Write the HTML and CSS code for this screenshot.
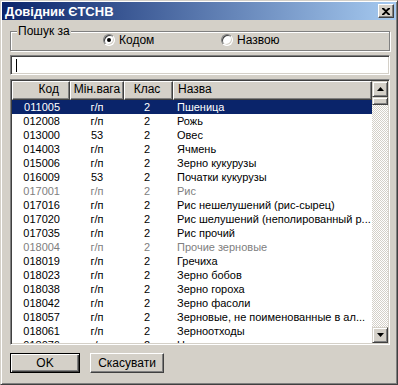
FILE: index.html
```html
<!DOCTYPE html>
<html lang="uk">
<head>
    <meta charset="UTF-8">
    <title>Довідник ЄТСНВ</title>
    <link rel="stylesheet" href="styles.css">
</head>
<body>

<div class="window">
    <!-- Title bar -->
    <div class="titlebar">
        <span class="title">Довідник ЄТСНВ</span>
        <span class="close-btn">
            <svg width="8" height="7" viewBox="0 0 8 7"><path d="M0 0h2l2 2 2-2h2v1L5 3.5 8 6v1H6L4 5 2 7H0V6l3-2.5L0 1z" fill="#000"/></svg>
        </span>
    </div>

    <div class="content">
        <!-- Search mode -->
        <fieldset class="search-group">
            <legend>Пошук за</legend>
            <div class="radio-row">
                <label class="radio-item"><span class="radio checked"></span>Кодом</label>
                <label class="radio-item"><span class="radio"></span>Назвою</label>
            </div>
        </fieldset>

        <!-- Search field -->
        <div class="search-input"><span class="caret"></span></div>

        <!-- Grid -->
        <div class="grid">
            <div class="grid-body">
                <div class="grid-header">
                    <div class="hcell col-code">Код</div>
                    <div class="hcell col-weight">Мін.вага</div>
                    <div class="hcell col-class">Клас</div>
                    <div class="hcell col-name">Назва</div>
                </div>
                <div class="rows">
                    <div class="row selected"><span class="col-code">011005</span><span class="col-weight">г/п</span><span class="col-class">2</span><span class="col-name">Пшеница</span></div>
                    <div class="row"><span class="col-code">012008</span><span class="col-weight">г/п</span><span class="col-class">2</span><span class="col-name">Рожь</span></div>
                    <div class="row"><span class="col-code">013000</span><span class="col-weight">53</span><span class="col-class">2</span><span class="col-name">Овес</span></div>
                    <div class="row"><span class="col-code">014003</span><span class="col-weight">г/п</span><span class="col-class">2</span><span class="col-name">Ячмень</span></div>
                    <div class="row"><span class="col-code">015006</span><span class="col-weight">г/п</span><span class="col-class">2</span><span class="col-name">Зерно кукурузы</span></div>
                    <div class="row"><span class="col-code">016009</span><span class="col-weight">53</span><span class="col-class">2</span><span class="col-name">Початки кукурузы</span></div>
                    <div class="row disabled"><span class="col-code">017001</span><span class="col-weight">г/п</span><span class="col-class">2</span><span class="col-name">Рис</span></div>
                    <div class="row"><span class="col-code">017016</span><span class="col-weight">г/п</span><span class="col-class">2</span><span class="col-name">Рис нешелушений (рис-сырец)</span></div>
                    <div class="row"><span class="col-code">017020</span><span class="col-weight">г/п</span><span class="col-class">2</span><span class="col-name">Рис шелушений (неполированный р...</span></div>
                    <div class="row"><span class="col-code">017035</span><span class="col-weight">г/п</span><span class="col-class">2</span><span class="col-name">Рис прочий</span></div>
                    <div class="row disabled"><span class="col-code">018004</span><span class="col-weight">г/п</span><span class="col-class">2</span><span class="col-name">Прочие зерновые</span></div>
                    <div class="row"><span class="col-code">018019</span><span class="col-weight">г/п</span><span class="col-class">2</span><span class="col-name">Гречиха</span></div>
                    <div class="row"><span class="col-code">018023</span><span class="col-weight">г/п</span><span class="col-class">2</span><span class="col-name">Зерно бобов</span></div>
                    <div class="row"><span class="col-code">018038</span><span class="col-weight">г/п</span><span class="col-class">2</span><span class="col-name">Зерно гороха</span></div>
                    <div class="row"><span class="col-code">018042</span><span class="col-weight">г/п</span><span class="col-class">2</span><span class="col-name">Зерно фасоли</span></div>
                    <div class="row"><span class="col-code">018057</span><span class="col-weight">г/п</span><span class="col-class">2</span><span class="col-name">Зерновые, не поименованные в ал...</span></div>
                    <div class="row"><span class="col-code">018061</span><span class="col-weight">г/п</span><span class="col-class">2</span><span class="col-name">Зерноотходы</span></div>
                    <div class="row"><span class="col-code">018076</span><span class="col-weight">г/п</span><span class="col-class">2</span><span class="col-name">Нут</span></div>
                </div>
            </div>

            <!-- Vertical scrollbar -->
            <div class="scrollbar">
                <span class="sb-btn"><svg width="7" height="4" viewBox="0 0 7 4"><path d="M3.5 0L7 4H0z" fill="#000"/></svg></span>
                <span class="sb-thumb"></span>
                <span class="sb-track"></span>
                <span class="sb-btn"><svg width="7" height="4" viewBox="0 0 7 4"><path d="M0 0h7L3.5 4z" fill="#000"/></svg></span>
            </div>
        </div>

        <!-- Dialog buttons -->
        <div class="buttons">
            <div class="btn default">OK</div>
            <div class="btn">Скасувати</div>
        </div>
    </div>
</div>

</body>
</html>
```

FILE: styles.css
```css
* {
    box-sizing: border-box;
}

body {
    margin: 0;
    background-color: #d4d0c8;
    font-family: "Liberation Sans", Arial, sans-serif;
    font-size: 11px;
    color: #000;
}

.window {
    width: 398px;
    height: 385px;
    display: flex;
    flex-direction: column;
    border: 1px solid;
    border-color: #d4d0c8 #404040 #404040 #d4d0c8;
    padding: 1px;
    box-shadow: inset 1px 1px #fff, inset -1px -1px #808080;
}

/* Title bar */
.titlebar {
    height: 18px;
    display: flex;
    align-items: center;
    justify-content: space-between;
    padding: 0 2px 0 3px;
    background: linear-gradient(to right, #0a246a, #a6caf0);
    color: #fff;
    font-size: 13px;
    font-weight: bold;
}

.close-btn {
    width: 16px;
    height: 14px;
    display: flex;
    align-items: center;
    justify-content: center;
    background-color: #d4d0c8;
    border: 1px solid;
    border-color: #fff #404040 #404040 #fff;
    box-shadow: inset -1px -1px #808080;
}

.content {
    flex: 1;
    display: flex;
    flex-direction: column;
    padding: 5px 6px 0 8px;
}

/* Search group box */
.search-group {
    margin: 0;
    padding: 0 0 3px;
    border: 1px solid #808080;
    box-shadow: inset 1px 1px #fff, 1px 1px #fff;
    min-width: 0;
}

.search-group legend {
    margin-left: 6px;
    padding: 0 1px;
    height: 13px;
    line-height: 13px;
    background-color: #d4d0c8;
    font-size: 12px;
}

.radio-row {
    display: flex;
    height: 14px;
    margin-top: -5px;
    padding-left: 92px;
    font-size: 12px;
}

.radio-item {
    width: 118px;
    display: flex;
    align-items: center;
    gap: 4px;
}

.radio {
    width: 12px;
    height: 12px;
    border-radius: 50%;
    border: 1px solid;
    border-color: #808080 #fff #fff #808080;
    background-color: #fff;
    box-shadow: inset 1px 1px #404040, inset -1px -1px #d4d0c8;
    display: flex;
    align-items: center;
    justify-content: center;
}

.radio.checked::after {
    content: "";
    width: 4px;
    height: 4px;
    border-radius: 50%;
    background-color: #000;
}

/* Sunken controls */
.search-input,
.grid {
    border: 1px solid;
    border-color: #808080 #fff #fff #808080;
    box-shadow: inset 1px 1px #404040, inset -1px -1px #d4d0c8;
}

.search-input {
    height: 20px;
    margin-top: 4px;
    padding: 3px 5px;
    background-color: #fff;
}

.caret {
    display: block;
    width: 1px;
    height: 13px;
    background-color: #000;
}

.grid {
    height: 266px;
    margin-top: 4px;
    padding: 1px;
    display: flex;
    background-color: #fff;
}

.grid-body {
    flex: 1;
    overflow: hidden;
}

.grid-header,
.row {
    display: grid;
    grid-template-columns: 58px 54px 49px 1fr;
}

.grid-header {
    height: 19px;
    background-color: #d4d0c8;
}

.hcell {
    line-height: 15px;
    border: 1px solid;
    border-color: #fff #404040 #404040 #fff;
    box-shadow: inset -1px -1px #808080;
    font-size: 12px;
}

.row {
    height: 14px;
    line-height: 14px;
    white-space: nowrap;
}

.row.selected {
    background-color: #0a246a;
    color: #fff;
}

.row.disabled {
    color: #808080;
}

.col-code {
    text-align: right;
    padding-right: 10px;
}

.col-weight {
    text-align: center;
}

.col-class {
    text-align: center;
    padding-right: 3px;
}

.col-name {
    padding-left: 4px;
    overflow: hidden;
}

/* Scrollbar */
.scrollbar {
    width: 16px;
    display: flex;
    flex-direction: column;
    background: repeating-conic-gradient(#d4d0c8 0 25%, #fff 0 50%) 0 0 / 2px 2px;
}

.sb-btn,
.sb-thumb {
    display: flex;
    align-items: center;
    justify-content: center;
    background-color: #d4d0c8;
    border: 1px solid;
    border-color: #d4d0c8 #404040 #404040 #d4d0c8;
    box-shadow: inset 1px 1px #fff, inset -1px -1px #808080;
}

.sb-btn {
    height: 16px;
}

.sb-thumb {
    height: 8px;
}

.sb-track {
    flex: 1;
}

/* Dialog buttons */
.buttons {
    display: flex;
    gap: 10px;
    margin-top: 8px;
}

.btn {
    width: 70px;
    height: 20px;
    display: flex;
    align-items: center;
    justify-content: center;
    border: 1px solid;
    border-color: #fff #404040 #404040 #fff;
    box-shadow: inset -1px -1px #808080;
    font-size: 12px;
}

.btn.default {
    border-color: #000;
    box-shadow: inset 1px 1px #fff, inset -1px -1px #404040, inset -2px -2px #808080;
}

.btn + .btn {
    width: 74px;
}
```
